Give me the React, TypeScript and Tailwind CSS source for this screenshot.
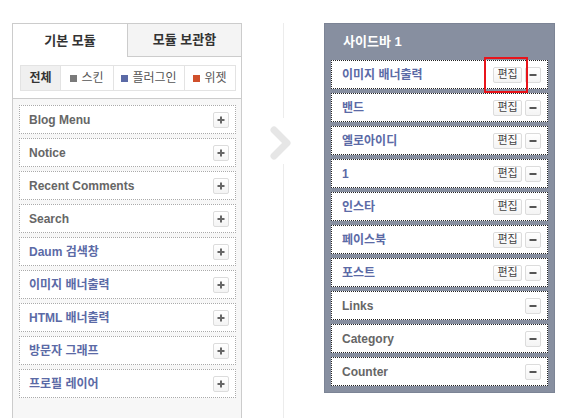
import React from "react";

const FONT = '"Liberation Sans", "Noto Sans CJK KR", sans-serif';

const leftItems: { label: string; blue: boolean }[] = [
  { label: "Blog Menu", blue: false },
  { label: "Notice", blue: false },
  { label: "Recent Comments", blue: false },
  { label: "Search", blue: false },
  { label: "Daum 검색창", blue: true },
  { label: "이미지 배너출력", blue: true },
  { label: "HTML 배너출력", blue: true },
  { label: "방문자 그래프", blue: true },
  { label: "프로필 레이어", blue: true },
];

const rightItems: { label: string; blue: boolean; edit: boolean }[] = [
  { label: "이미지 배너출력", blue: true, edit: true },
  { label: "밴드", blue: true, edit: true },
  { label: "옐로아이디", blue: true, edit: true },
  { label: "1", blue: true, edit: true },
  { label: "인스타", blue: true, edit: true },
  { label: "페이스북", blue: true, edit: true },
  { label: "포스트", blue: true, edit: true },
  { label: "Links", blue: false, edit: false },
  { label: "Category", blue: false, edit: false },
  { label: "Counter", blue: false, edit: false },
];

function PlusBtn() {
  return (
    <div className="w-[16px] h-[16px] border border-[#dcdcdc] rounded-[2px] bg-gradient-to-b from-white to-[#f4f4f4] flex items-center justify-center">
      <svg width="8" height="8" viewBox="0 0 8 8">
        <rect x="3" y="0.5" width="2" height="7" fill="#666" />
        <rect x="0.5" y="3" width="7" height="2" fill="#666" />
      </svg>
    </div>
  );
}

function MinusBtn() {
  return (
    <div className="w-[16px] h-[16px] border border-[#dcdcdc] rounded-[2px] bg-gradient-to-b from-white to-[#f4f4f4] flex items-center justify-center">
      <svg width="8" height="8" viewBox="0 0 8 8">
        <rect x="0.5" y="3" width="7" height="2" fill="#555" />
      </svg>
    </div>
  );
}

export default function App() {
  return (
    <div
      className="w-[579px] h-[418px] bg-white flex pt-[23px] pl-[12px] overflow-hidden"
      style={{ fontFamily: FONT }}
    >
      {/* Left panel */}
      <div className="w-[230px] border border-b-0 border-[#cccccc] flex flex-col">
        <div className="flex h-[33px]">
          <div className="w-[114px] flex items-center justify-center text-[13px] font-bold text-[#333]">
            기본 모듈
          </div>
          <div className="flex-1 bg-[#f4f4f4] border-l border-b border-[#cccccc] flex items-center justify-center text-[13px] font-bold text-[#333]">
            모듈 보관함
          </div>
        </div>
        <div className="bg-white border-b border-[#cccccc] pt-[8px] pb-[7px] pl-[7px]">
          <div className="w-[216px] h-[26px] border border-[#e3e3e3] flex text-[12px] text-[#555]">
            <div className="w-[40px] bg-[#f0f0f0] border-r border-[#e3e3e3] flex items-center justify-center font-bold text-[#333]">
              전체
            </div>
            <div className="w-[53px] border-r border-[#e3e3e3] flex items-center justify-center gap-[4px]">
              <span className="w-[7px] h-[7px] bg-[#7a7a7a] inline-block" />
              스킨
            </div>
            <div className="w-[71px] border-r border-[#e3e3e3] flex items-center justify-center gap-[4px]">
              <span className="w-[7px] h-[7px] bg-[#5b6aa6] inline-block" />
              플러그인
            </div>
            <div className="flex-1 flex items-center justify-center gap-[4px]">
              <span className="w-[7px] h-[7px] bg-[#d0502c] inline-block" />
              위젯
            </div>
          </div>
        </div>
        <div className="flex-1 bg-[#f7f7f7] pt-[6px] pl-[6px] flex flex-col gap-[4px]">
          {leftItems.map((it) => (
            <div
              key={it.label}
              className="w-[217px] h-[29px] bg-white border border-dotted border-[#aaaaaa] flex items-center justify-between pl-[9px] pr-[6px]"
            >
              <span
                className={`text-[12px] font-bold ${it.blue ? "text-[#5b6aa6]" : "text-[#666666]"}`}
              >
                {it.label}
              </span>
              <PlusBtn />
            </div>
          ))}
        </div>
      </div>

      {/* Middle divider */}
      <div className="w-[82px] flex flex-col items-center">
        <div className="w-px h-[95px] bg-[#ececec]" />
        <svg width="30" height="46" viewBox="0 0 30 46" className="-ml-[2px]">
          <polyline
            points="7,12 20,25 7,38"
            fill="none"
            stroke="#e6e6e6"
            strokeWidth="7"
            strokeLinecap="round"
            strokeLinejoin="round"
          />
        </svg>
        <div className="w-px flex-1 bg-[#ececec]" />
      </div>

      {/* Right panel */}
      <div className="w-[231px] self-start bg-[#878fa0] border border-[#7c8495] flex flex-col pb-[6px]">
        <div className="h-[36px] flex items-center pl-[18px] text-[13px] font-bold text-white">
          사이드바 1
        </div>
        <div className="flex flex-col gap-[4px] pl-[6px]">
          {rightItems.map((it, i) => (
            <div
              key={it.label}
              className="relative w-[217px] h-[29px] bg-white border border-dotted border-[#222] flex items-center pl-[10px] pr-[6px]"
            >
              <span
                className={`flex-1 text-[12px] font-bold ${it.blue ? "text-[#5b6aa6]" : "text-[#666666]"}`}
              >
                {it.label}
              </span>
              {it.edit && (
                <div className="w-[29px] h-[16px] border border-[#dcdcdc] rounded-[2px] bg-gradient-to-b from-white to-[#f4f4f4] flex items-center justify-center text-[11px] text-[#444] mr-[3px] leading-none">
                  편집
                </div>
              )}
              <MinusBtn />
              {i === 0 && (
                <div className="absolute left-[152px] top-[-4px] w-[44px] h-[36px] border-2 border-[#e8141b]" />
              )}
            </div>
          ))}
        </div>
      </div>
    </div>
  );
}
